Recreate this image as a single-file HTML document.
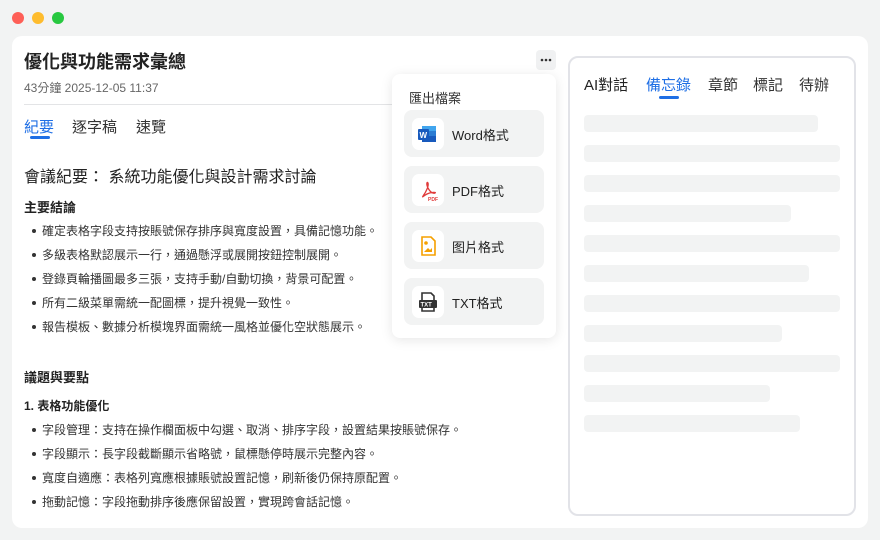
<!DOCTYPE html>
<html><head><meta charset="utf-8"><style>
*{margin:0;padding:0;box-sizing:border-box}
body{width:880px;height:540px;background:#f2f3f3;font-family:"Liberation Sans","Noto Sans CJK TC",sans-serif;color:#222;position:relative;overflow:hidden}
.a{position:absolute;white-space:nowrap}
.dot{position:absolute;top:12px;width:12px;height:12px;border-radius:50%}
.card{position:absolute;left:12px;top:36px;width:856px;height:492px;background:#fff;border-radius:10px}
.b{font-size:12px;color:#333}
.b:before{content:"";position:absolute;left:-10px;top:7px;width:4px;height:4px;border-radius:50%;background:#333}
.sk{position:absolute;left:584px;height:17px;background:#f2f3f3;border-radius:4px}
.it{position:absolute;left:404px;width:140px;height:47px;background:#f2f3f3;border-radius:8px}
.ic{position:absolute;left:8px;top:8px;width:32px;height:32px;background:#fff;border-radius:7px}
.it .l{position:absolute;left:48px;top:15px;font-size:13px;color:#222}
</style></head><body>
<div class="dot" style="left:12px;background:#fe5f57"></div>
<div class="dot" style="left:32px;background:#febc2e"></div>
<div class="dot" style="left:52px;background:#28c840"></div>
<div class="card"></div>
<div class="a" style="left:24px;top:48px;font-size:18px;font-weight:bold;color:#222">優化與功能需求彙總</div>
<div class="a" style="left:24px;top:79px;font-size:12px;color:#666">43分鐘 2025-12-05 11:37</div>
<div class="a" style="left:24px;top:104px;width:532px;height:1px;background:#e3e4e6"></div>
<div class="a" style="left:24px;top:116px;font-size:15px;color:#1f6fe5">紀要</div>
<div class="a" style="left:30px;top:136px;width:20px;height:3px;border-radius:2px;background:#1f6fe5"></div>
<div class="a" style="left:72px;top:116px;font-size:15px;color:#333">逐字稿</div>
<div class="a" style="left:136px;top:116px;font-size:15px;color:#333">速覽</div>
<div class="a" style="left:24px;top:163px;font-size:16px;color:#222">會議紀要：&nbsp;系統功能優化與設計需求討論</div>
<div class="a" style="left:24px;top:197px;font-size:13px;font-weight:bold">主要結論</div>
<div class="a b" style="left:42px;top:222px">確定表格字段支持按賬號保存排序與寬度設置，具備記憶功能。</div>
<div class="a b" style="left:42px;top:246px">多級表格默認展示一行，通過懸浮或展開按鈕控制展開。</div>
<div class="a b" style="left:42px;top:270px">登錄頁輪播圖最多三張，支持手動/自動切換，背景可配置。</div>
<div class="a b" style="left:42px;top:294px">所有二級菜單需統一配圖標，提升視覺一致性。</div>
<div class="a b" style="left:42px;top:318px">報告模板、數據分析模塊界面需統一風格並優化空狀態展示。</div>
<div class="a" style="left:24px;top:367px;font-size:13px;font-weight:bold">議題與要點</div>
<div class="a" style="left:24px;top:397px;font-size:12px;font-weight:bold">1. 表格功能優化</div>
<div class="a b" style="left:42px;top:421px">字段管理：支持在操作欄面板中勾選、取消、排序字段，設置結果按賬號保存。</div>
<div class="a b" style="left:42px;top:445px">字段顯示：長字段截斷顯示省略號，鼠標懸停時展示完整內容。</div>
<div class="a b" style="left:42px;top:469px">寬度自適應：表格列寬應根據賬號設置記憶，刷新後仍保持原配置。</div>
<div class="a b" style="left:42px;top:493px">拖動記憶：字段拖動排序後應保留設置，實現跨會話記憶。</div>

<div class="a" style="left:536px;top:50px;width:20px;height:20px;background:#f0f1f2;border-radius:4px"><svg width="20" height="20"><circle cx="6" cy="10" r="1.3" fill="#333"/><circle cx="10" cy="10" r="1.3" fill="#333"/><circle cx="14" cy="10" r="1.3" fill="#333"/></svg></div>
<div class="a" style="left:392px;top:74px;width:164px;height:264px;background:#fff;border-radius:8px;box-shadow:0 2px 12px rgba(0,0,0,.1)"></div>
<div class="a" style="left:409px;top:88px;font-size:13px;color:#333">匯出檔案</div>
<div class="it" style="top:110px"><div class="ic"><svg width="32" height="32"><rect x="10" y="8" width="14" height="16" rx="1.5" fill="#2b7cd3"/><rect x="10" y="8" width="14" height="5" fill="#41a5ee"/><rect x="10" y="18" width="14" height="6" fill="#185abd"/><rect x="6" y="11" width="11" height="11" rx="1" fill="#185abd"/><text x="7.5" y="20" font-size="8" fill="#fff" font-family="Liberation Sans" font-weight="bold">W</text></svg></div><div class="l">Word格式</div></div>
<div class="it" style="top:166px"><div class="ic"><svg width="32" height="32"><path d="M11 22c3-4 6-10 5-13-1-2-2 1 0 5s5 6 7 5-4-1-8 1-5 4-4 2" fill="none" stroke="#e03a3a" stroke-width="1.3"/><text x="16" y="27" font-size="5" fill="#e03a3a" font-family="Liberation Sans" font-weight="bold">PDF</text></svg></div><div class="l">PDF格式</div></div>
<div class="it" style="top:222px"><div class="ic"><svg width="32" height="32"><path d="M10 7h9l4 4v14h-13z" fill="none" stroke="#f5a000" stroke-width="1.6"/><circle cx="14" cy="13" r="1.8" fill="#f5a000"/><path d="M12 22l4-4 2 2 2-2v4z" fill="#f5a000"/></svg></div><div class="l">图片格式</div></div>
<div class="it" style="top:278px"><div class="ic"><svg width="32" height="32"><path d="M10 14V7h9l3 3v4" fill="none" stroke="#333" stroke-width="1.6"/><rect x="7" y="14" width="18" height="8" rx="1" fill="#333"/><text x="8.5" y="20.5" font-size="6" fill="#fff" font-family="Liberation Sans" font-weight="bold">TXT</text><path d="M10 22v3h12v-3" fill="none" stroke="#333" stroke-width="1.6"/></svg></div><div class="l">TXT格式</div></div>

<div class="a" style="left:568px;top:56px;width:288px;height:460px;border:2px solid #e2e3e8;border-radius:10px;background:#fff"></div>
<div class="a" style="left:584px;top:74px;font-size:15px;color:#222">AI對話</div>
<div class="a" style="left:646px;top:74px;font-size:15px;color:#1f6fe5">備忘錄</div>
<div class="a" style="left:659px;top:96px;width:20px;height:3px;border-radius:2px;background:#1f6fe5"></div>
<div class="a" style="left:708px;top:74px;font-size:15px;color:#333">章節</div>
<div class="a" style="left:753px;top:74px;font-size:15px;color:#333">標記</div>
<div class="a" style="left:799px;top:74px;font-size:15px;color:#333">待辦</div>
<div class="sk" style="top:115px;width:234px"></div>
<div class="sk" style="top:145px;width:256px"></div>
<div class="sk" style="top:175px;width:256px"></div>
<div class="sk" style="top:205px;width:207px"></div>
<div class="sk" style="top:235px;width:256px"></div>
<div class="sk" style="top:265px;width:225px"></div>
<div class="sk" style="top:295px;width:256px"></div>
<div class="sk" style="top:325px;width:198px"></div>
<div class="sk" style="top:355px;width:256px"></div>
<div class="sk" style="top:385px;width:186px"></div>
<div class="sk" style="top:415px;width:216px"></div>
</body></html>
